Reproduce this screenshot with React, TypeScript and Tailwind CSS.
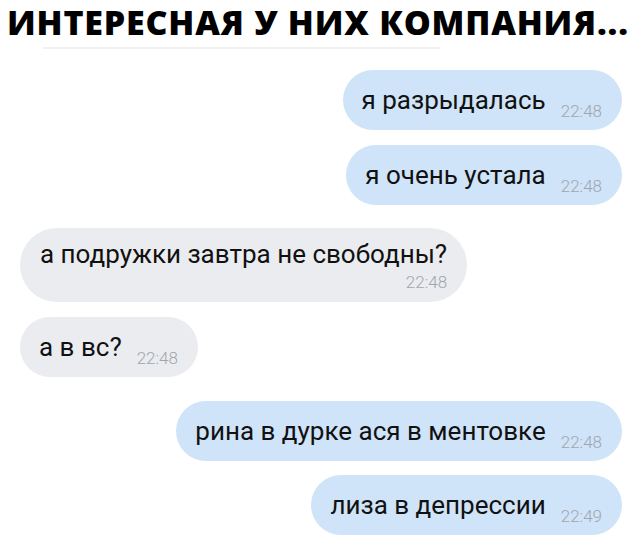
import React from 'react';

type Msg = { text: string; time: string; out: boolean; stacked?: boolean; gap: string };

const messages: Msg[] = [
  { text: 'я разрыдалась', time: '22:48', out: true, gap: 'mt-0' },
  { text: 'я очень устала', time: '22:48', out: true, gap: 'mt-[15px]' },
  { text: 'а подружки завтра не свободны?', time: '22:48', out: false, stacked: true, gap: 'mt-[23px]' },
  { text: 'а в вс?', time: '22:48', out: false, gap: 'mt-[15px]' },
  { text: 'рина в дурке ася в ментовке', time: '22:48', out: true, gap: 'mt-[24px]' },
  { text: 'лиза в депрессии', time: '22:49', out: true, gap: 'mt-[14px]' },
];

const Bubble: React.FC<{ msg: Msg }> = ({ msg }) => {
  const bg = msg.out ? 'bg-[#cfe3f9]' : 'bg-[#ebecef]';
  if (msg.stacked) {
    return (
      <div className={`${bg} rounded-[38px] px-[20px] pt-[9px] pb-[9px] flex flex-col`}>
        <span className="text-[26px] leading-[34px] text-[#111]">{msg.text}</span>
        <span className="self-end text-[17px] leading-[22px] font-light text-[#a0a6ae]">{msg.time}</span>
      </div>
    );
  }
  return (
    <div className={`${bg} rounded-full h-[60px] pl-[19px] pr-[20px] flex items-center`}>
      <span className="text-[26px] leading-[34px] text-[#111]">{msg.text}</span>
      <span className="ml-[15px] mt-[22px] text-[17px] leading-[22px] font-light text-[#a0a6ae]">{msg.time}</span>
    </div>
  );
};

const App: React.FC = () => {
  return (
    <div className="w-[640px] h-[553px] bg-white overflow-hidden" style={{ fontFamily: 'Roboto, "Noto Sans", sans-serif' }}>
      <h1
        className="pl-[7px] pt-[1px] text-[34px] leading-[43px] font-extrabold text-black whitespace-nowrap tracking-[0.8px]"
        style={{ fontFamily: '"Open Sans", Roboto, sans-serif' }}
      >
        ИНТЕРЕСНАЯ У НИХ КОМПАНИЯ...
      </h1>
      <div className="ml-[43px] w-[397px] h-[2px] bg-[#f1f1f1] mt-[3px]" />

      <div className="flex flex-col pl-[20px] pr-[18px] mt-[21px]">
        {messages.map((m, i) => (
          <div key={i} className={`flex ${m.out ? 'justify-end' : 'justify-start'} ${m.gap}`}>
            <Bubble msg={m} />
          </div>
        ))}
      </div>
    </div>
  );
};

export default App;
